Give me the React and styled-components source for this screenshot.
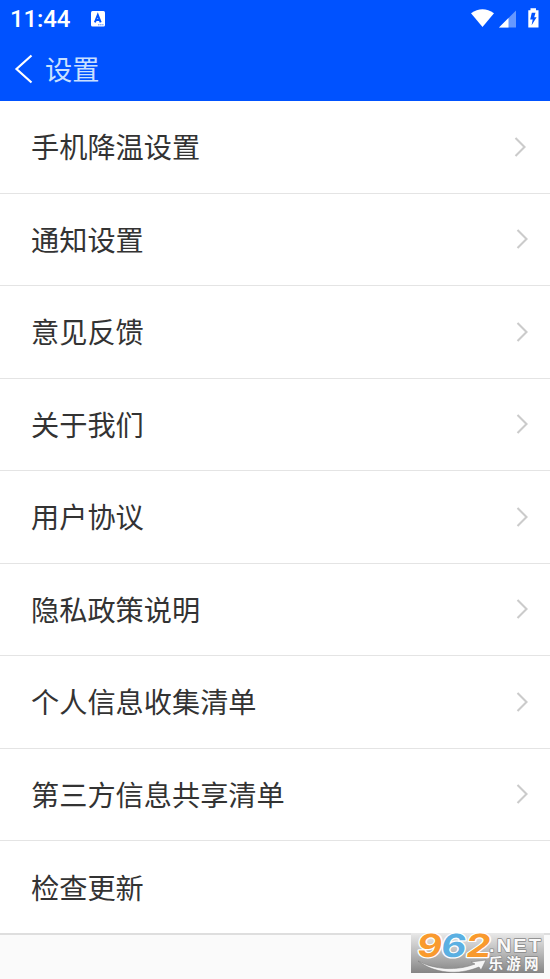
import styled, { createGlobalStyle } from "styled-components"

const GlobalStyle = createGlobalStyle`
    body {
        margin: 0;
        background-color: #fafafa;
        font-family: Roboto, "Noto Sans CJK SC", sans-serif;
    }
`

const Page = styled.div`
    position: relative;
    height: 979px;
    overflow: hidden;
    background-color: #fafafa;
`

const Header = styled.header`
    height: 101px;
    background-color: #0052ff;
    color: white;
`

const StatusBar = styled.div`
    height: 38px;
    padding: 0 9px 0 10px;
    display: flex;
    align-items: center;
`

const Time = styled.div`
    width: 80px;
    font-size: 24px;
    line-height: 38px;
    font-weight: 500;
    letter-spacing: -0.1px;
`

const StatusIcons = styled.div`
    margin-left: auto;
    display: flex;
    align-items: center;
`

const TitleBar = styled.div`
    height: 63px;
    padding-left: 14px;
    display: flex;
    align-items: center;
`

const Title = styled.h1`
    margin: 0 0 0 11px;
    padding-top: 3px;
    font-size: 27.2px;
    line-height: 40px;
    font-weight: 400;
    color: #c9e0ff;
`

const List = styled.div`
    background-color: white;
    border-bottom: 2px solid #dedede;
`

const Row = styled.div`
    box-sizing: border-box;
    height: ${props => props.$last ? "92px" : "92.5px"};
    padding: 0 ${props => props.$first ? "23px" : "21.5px"} 0 31px;
    display: flex;
    justify-content: space-between;
    align-items: center;
    border-bottom: ${props => props.$last ? "none" : "1px solid #e4e4e4"};
`

const Label = styled.div`
    padding-top: 5px;
    font-size: 28.2px;
    line-height: 40px;
    color: #333;
`

const Watermark = styled.svg`
    position: absolute;
    left: 411px;
    top: 933px;
    overflow: visible;
`

const items = [
    "手机降温设置",
    "通知设置",
    "意见反馈",
    "关于我们",
    "用户协议",
    "隐私政策说明",
    "个人信息收集清单",
    "第三方信息共享清单",
    "检查更新",
]

function Arrow(){
    return (
        <svg width="14" height="22" viewBox="0 0 14 22" fill="none" stroke="#cbcbcb" strokeWidth="2.1">
            <path d="M2.5 2L11.5 11L2.5 20" />
        </svg>
    )
}

function InputIcon(){
    return (
        <svg width="16" height="18" viewBox="0 0 16 18">
            <rect x="1" y="1" width="14" height="15.5" rx="1.5" fill="white" />
            <path d="M4.9 12.4L7.8 5L10.7 12.4M5.8 10H9.8" fill="none" stroke="#0052ff" strokeWidth="2" />
            <path d="M8 14.8H13.5" stroke="#0052ff" strokeWidth="0.7" strokeDasharray="1.5 0.6" />
        </svg>
    )
}

function SystemIcons(){
    return (
        <svg width="72" height="22" viewBox="0 0 72 22">
            <path d="M2 5.2Q13.5 -2.6 25 5.2L13.5 19Z" fill="white" />
            <path d="M30 19.5L47 2.5V19.5Z" fill="#6698ff" />
            <path d="M30 19.5L39.5 10V19.5Z" fill="white" />
            <path d="M59.3 2.2H61.5V0.2H67V2.2H69.5V19.5H59.3Z" fill="white" />
            <path d="M66.5 4.8H62.8L61.2 11.4H63.7L62.6 17.2L67.6 9.2H65.2Z" fill="#0052ff" />
        </svg>
    )
}

function SiteLogo(){
    return (
        <Watermark width="133" height="40" viewBox="0 0 133 40">
            <defs>
                <linearGradient id="plate" x1="0" y1="0" x2="0" y2="1">
                    <stop offset="0" stopColor="#e9e9e9" />
                    <stop offset="0.5" stopColor="#b9b9b9" />
                    <stop offset="1" stopColor="#858585" />
                </linearGradient>
            </defs>
            <rect width="133" height="40" fill="url(#plate)" />
            <path d="M7 28C24 37 46 38 64 31L60 29L75 27L70 37L68 34C46 43 23 40 7 28Z" fill="#f5f5f5" stroke="#777" strokeWidth="0.5" />
            <g fontFamily="Inter, sans-serif" fontWeight="700" fontSize="32" stroke="white" strokeWidth="2.4" strokeLinejoin="round" paintOrder="stroke" transform="translate(3 0) skewX(-8)">
                <text x="5.5" y="24" textLength="25" lengthAdjust="spacingAndGlyphs" fill="#f99a2e">9</text>
                <text x="29.5" y="24" textLength="25" lengthAdjust="spacingAndGlyphs" fill="#5bb0e2">6</text>
                <text x="54" y="24" textLength="25" lengthAdjust="spacingAndGlyphs" fill="#f99a2e">2</text>
            </g>
            <g fill="#fafafa" stroke="#888" strokeWidth="1.4" strokeLinejoin="round" paintOrder="stroke">
                <text x="78" y="18.5" fontFamily="Liberation Sans, sans-serif" fontWeight="bold" fontSize="18.5" letterSpacing="2" textLength="54" lengthAdjust="spacingAndGlyphs">.NET</text>
                <text x="77.5" y="35.5" fontFamily="Noto Sans CJK SC, sans-serif" fontWeight="bold" fontSize="14.5" textLength="50">乐游网</text>
            </g>
        </Watermark>
    )
}

export default function App(){
    return (
        <Page>
            <GlobalStyle />
            <Header>
                <StatusBar>
                    <Time>11:44</Time>
                    <InputIcon />
                    <StatusIcons>
                        <SystemIcons />
                    </StatusIcons>
                </StatusBar>
                <TitleBar>
                    <svg width="20" height="32" viewBox="0 0 20 32" fill="none" stroke="white" strokeWidth="2.2">
                        <path d="M17.5 1.5L2.5 15L17.5 28.5" />
                    </svg>
                    <Title>设置</Title>
                </TitleBar>
            </Header>
            <List>
                {items.map((item, index) => (
                    <Row key={item} $first={index === 0} $last={index === items.length - 1}>
                        <Label>{item}</Label>
                        {index < items.length - 1 && <Arrow />}
                    </Row>
                ))}
            </List>
            <SiteLogo />
        </Page>
    )
}
